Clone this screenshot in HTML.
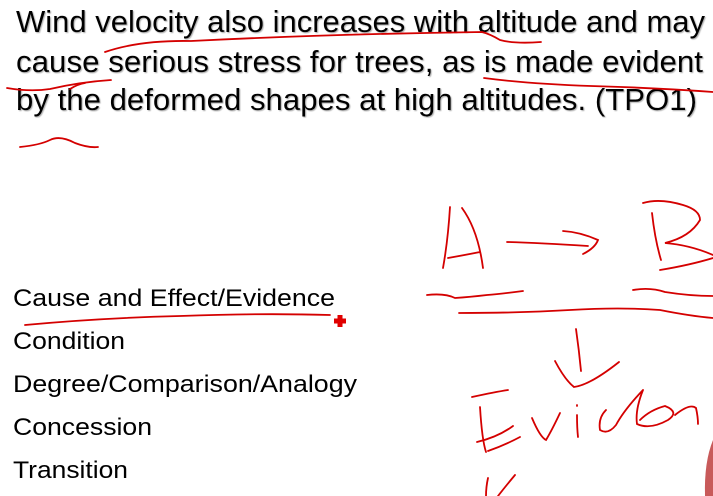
<!DOCTYPE html>
<html><head><meta charset="utf-8"><style>
html,body{margin:0;padding:0;background:#fff;width:713px;height:496px;overflow:hidden}
svg{display:block}
text{font-family:"Liberation Sans",Arial,sans-serif;fill:#000}
</style></head><body>
<svg width="713" height="496" viewBox="0 0 713 496" xmlns="http://www.w3.org/2000/svg">
<defs><filter id="sh"><feDropShadow dx="1" dy="1" stdDeviation="0.6" flood-color="#888" flood-opacity="0.7"/></filter></defs>
<g filter="url(#sh)" font-size="31">
<text x="16" y="32" textLength="689" lengthAdjust="spacingAndGlyphs">Wind velocity also increases with altitude and may</text>
<text x="16" y="72" textLength="687" lengthAdjust="spacingAndGlyphs">cause serious stress for trees, as is made evident</text>
<text x="16" y="110" textLength="681" lengthAdjust="spacingAndGlyphs">by the deformed shapes at high altitudes. (TPO1)</text>
</g>
<g font-size="24">
<text x="13" y="306" textLength="322" lengthAdjust="spacingAndGlyphs">Cause and Effect/Evidence</text>
<text x="13" y="349" textLength="112" lengthAdjust="spacingAndGlyphs">Condition</text>
<text x="13" y="392" textLength="344" lengthAdjust="spacingAndGlyphs">Degree/Comparison/Analogy</text>
<text x="13" y="435" textLength="139" lengthAdjust="spacingAndGlyphs">Concession</text>
<text x="13" y="478" textLength="115" lengthAdjust="spacingAndGlyphs">Transition</text>
</g>
<g fill="none" stroke="#d40000" stroke-width="1.8" stroke-linecap="round">
<path d="M105 52 Q140 40 191 41 Q330 34 482 32 Q490 34 500 40 Q515 44 541 42"/>
<path d="M484 78 Q530 84 591 86 Q660 88 713 92"/>
<path d="M7 88 Q30 92 50 89 Q80 82 111 80"/>
<path d="M70 89 Q78 84 85 83"/>
<path d="M20 147 Q40 145 50 140 Q60 135 75 143 Q88 148 98 147"/>
<path d="M25 325 Q100 318 180 316 Q260 313 330 315"/>
<path d="M443 268 Q448 240 450 207 M462 208 Q478 230 483 268 M448 258 Q465 255 480 252"/>
<path d="M507 242 Q540 243 588 246 M563 231 Q580 232 598 240 Q595 248 583 254"/>
<path d="M652 213 Q655 240 661 260 M643 203 Q660 198 683 205 Q700 210 700 220 Q690 237 665 243 Q690 245 713 255 M660 270 Q690 265 713 258"/>
<path d="M427 295 Q445 293 455 298 Q470 297 487 295 Q500 294 523 291"/>
<path d="M633 290 Q650 287 665 292 Q690 296 713 296"/>
<path d="M459 313 Q520 313 570 310 Q620 307 660 310 Q690 316 713 318"/>
<path d="M576 329 Q579 350 581 371 M555 361 Q565 380 574 387 Q590 385 619 362"/>
<path d="M472 397 Q495 392 508 390 M480 407 Q482 440 486 452 M477 442 Q498 437 513 426 M488 451 Q505 445 520 437"/>
<path d="M532 418 Q540 437 546 440 Q552 430 560 413 M577 415 Q577 428 578 437 M577 405 L577 406"/>
<path d="M606 410 Q598 418 600 430 Q608 435 616 425 Q624 410 643 390 M643 390 Q635 410 637 424 Q650 430 668 420 Q680 412 665 406 Q650 410 640 420 M675 415 Q690 403 696 408 Q698 417 698 424"/>
<path d="M486 496 Q486 487 488 478 M498 496 Q505 487 515 475"/>
</g>
<path d="M340 315 v12 M334 321 h12" stroke="#e00000" stroke-width="5"/>
<path d="M713 440 Q704 462 705 496 L713 496 Z" fill="#c85a5a"/>
</svg>
</body></html>
